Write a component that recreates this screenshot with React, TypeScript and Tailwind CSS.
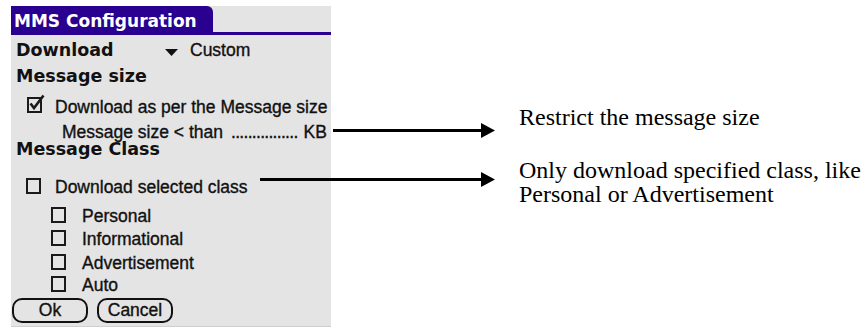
import React from 'react'

const palm = "font-['Liberation_Sans',Arial,sans-serif] text-[17.5px] text-[#111] [-webkit-text-stroke:0.35px_#111]"
const palmBold = "font-['DejaVu_Sans',Verdana,sans-serif] font-bold text-[17.5px] text-[#111]"

function Box() {
  return <span className="inline-block w-[15px] h-[16px] border-2 border-[#1a1a1a] shrink-0 translate-y-[1px]" />
}

function CheckedBox() {
  return (
    <svg width="18" height="19" viewBox="0 0 18 19" className="shrink-0">
      <rect x="1" y="4" width="13" height="14" fill="none" stroke="#1a1a1a" strokeWidth="2" />
      <path d="M3.5 9.5 L7 14 L16.5 1.5" fill="none" stroke="#1a1a1a" strokeWidth="2.6" />
    </svg>
  )
}

function SubOption({ label, h }: { label: string; h: string }) {
  return (
    <div className={`flex items-baseline pl-[40px] leading-[16px] ${h} ${palm}`}>
      <Box />
      <span className="ml-[16px]">{label}</span>
    </div>
  )
}

function Arrow({ from, y }: { from: number; y: number }) {
  // annotation arrow laid over the screenshot
  return (
    <div className="absolute flex items-center" style={{ left: from, top: y - 8 }}>
      <div className="h-[3px] bg-black" style={{ width: 481 - from }} />
      <svg width="14" height="15" viewBox="0 0 14 15">
        <polygon points="0,0 14,7.5 0,15" fill="#000" />
      </svg>
    </div>
  )
}

export default function App() {
  return (
    <div className="relative flex w-[866px] h-[327px] bg-white overflow-hidden">
      <div className="ml-[11px] mt-[6px] w-[320px] h-[321px] bg-[#e4e4e4] border-b border-[#cfcfcf] flex flex-col overflow-hidden whitespace-nowrap">
        <div className="flex border-b-[3px] border-[#2a0090]">
          <div className="w-[202px] h-[26px] bg-[#2a0090] rounded-tr-[6px] pl-[3px] pt-[5px] leading-[20px] font-['DejaVu_Sans',Verdana,sans-serif] font-bold text-[17px] text-white">
            MMS Configuration
          </div>
        </div>

        <div className="flex flex-col pt-[7px]">
          <div className="flex items-baseline h-[26px] leading-[16px] pl-[5px]">
            <span className={`w-[149px] ${palmBold}`}>Download</span>
            <svg width="13" height="7" viewBox="0 0 13 7">
              <polygon points="0,0 13,0 6.5,7" fill="#111" />
            </svg>
            <span className={`ml-[12px] ${palm}`}>Custom</span>
          </div>

          <div className={`h-[26px] leading-[16px] pl-[5px] ${palmBold}`}>Message size</div>

          <div className={`flex items-baseline h-[30px] leading-[16px] pl-[16px] ${palm}`}>
            <CheckedBox />
            <span className="ml-[10px]">Download as per the Message size</span>
          </div>

          <div className={`flex items-baseline h-[17px] leading-[16px] pl-[51px] ${palm}`}>
            <span>Message size &lt; than</span>
            <span className="ml-[8px] tracking-[-0.7px]">................</span>
            <span className="ml-[6px]">KB</span>
          </div>

          <div className={`h-[36px] leading-[16px] pl-[5px] ${palmBold}`}>Message Class</div>

          <div className={`flex items-baseline h-[29px] leading-[16px] pl-[15px] ${palm}`}>
            <Box />
            <span className="ml-[14px]">Download selected class</span>
          </div>

          <SubOption label="Personal" h="h-[23px]" />
          <SubOption label="Informational" h="h-[24px]" />
          <SubOption label="Advertisement" h="h-[22px]" />
          <SubOption label="Auto" h="h-[23px]" />

          <div className={`flex gap-[9px] pl-[1px] ${palm}`}>
            <button className="w-[76px] h-[25px] border-2 border-[#111] rounded-[10px] flex items-center justify-center leading-none">
              Ok
            </button>
            <button className="w-[76px] h-[25px] border-2 border-[#111] rounded-[10px] flex items-center justify-center leading-none">
              Cancel
            </button>
          </div>
        </div>
      </div>

      <div className="ml-[188px] pt-[105px] flex flex-col font-['Liberation_Serif','Times_New_Roman',serif] text-[24px] leading-[24px] text-black">
        <p>Restrict the message size</p>
        <p className="mt-[29px] whitespace-nowrap">
          Only download specified class, like
          <br />
          Personal or Advertisement
        </p>
      </div>

      <Arrow from={333} y={131} />
      <Arrow from={260} y={180} />
    </div>
  )
}
